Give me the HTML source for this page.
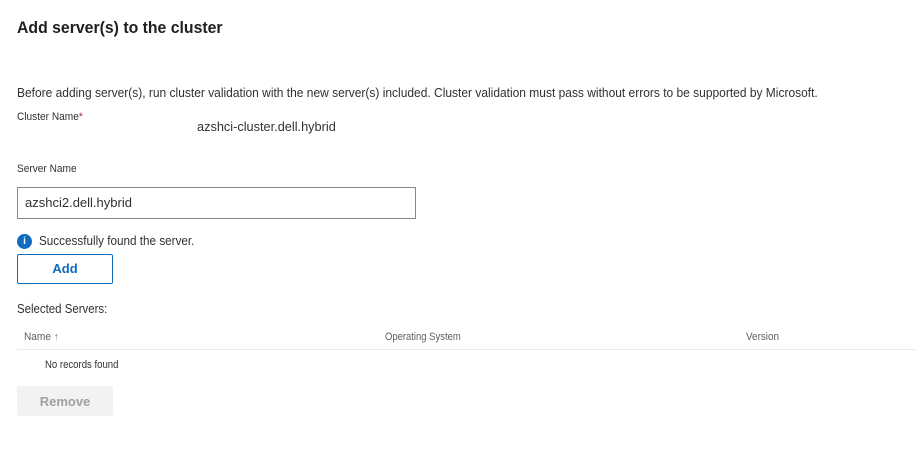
<!DOCTYPE html>
<html><head><meta charset="utf-8"><style>
body{margin:0;width:916px;height:461px;background:#fff;font-family:"Liberation Sans",sans-serif;color:#323130;position:relative;overflow:hidden}
.a{position:absolute;white-space:nowrap;transform-origin:left center}
</style></head><body>
<div class="a" style="left:17px;top:18px;font-size:17px;font-weight:bold;color:#201f1e;transform:scaleX(0.93)">Add server(s) to the cluster</div>
<div class="a" style="left:17px;top:85px;font-size:13px;transform:scaleX(0.922)">Before adding server(s), run cluster validation with the new server(s) included. Cluster validation must pass without errors to be supported by Microsoft.</div>
<div class="a" style="left:17px;top:111px;font-size:11px;transform:scaleX(0.92)">Cluster Name<span style="color:#a4262c">*</span></div>
<div class="a" style="left:197px;top:119px;font-size:13px;transform:scaleX(0.98)">azshci-cluster.dell.hybrid</div>
<div class="a" style="left:17px;top:163px;font-size:11px;transform:scaleX(0.92)">Server Name</div>
<div class="a" style="left:17px;top:187px;width:397px;height:30px;border:1px solid #8a8886"></div>
<div class="a" style="left:25px;top:195px;font-size:13px;transform:scaleX(1.0)">azshci2.dell.hybrid</div>
<div class="a" style="left:17px;top:234px;width:15px;height:15px;border-radius:50%;background:#0f6cbd;color:#fff;font-size:10px;font-weight:bold;text-align:center;line-height:15px">i</div>
<div class="a" style="left:39px;top:233px;font-size:13px;transform:scaleX(0.9)">Successfully found the server.</div>
<div class="a" style="left:17px;top:254px;width:94px;height:28px;border:1px solid #0f6cbd;border-radius:2px"></div>
<div class="a" style="left:17px;top:261px;width:96px;text-align:center;font-size:13px;font-weight:bold;color:#0f6cbd">Add</div>
<div class="a" style="left:17px;top:301px;font-size:13px;transform:scaleX(0.88)">Selected Servers:</div>
<div class="a" style="left:24px;top:331px;font-size:11px;color:#605e5c;transform:scaleX(0.92)">Name <span style="font-weight:lighter;color:#8a8886">↑</span></div>
<div class="a" style="left:385px;top:331px;font-size:11px;color:#605e5c;transform:scaleX(0.86)">Operating System</div>
<div class="a" style="left:746px;top:331px;font-size:11px;color:#605e5c;transform:scaleX(0.9)">Version</div>
<div class="a" style="left:17px;top:349px;width:899px;height:1px;background:#edebe9"></div>
<div class="a" style="left:45px;top:359px;font-size:11px;transform:scaleX(0.87)">No records found</div>
<div class="a" style="left:17px;top:386px;width:96px;height:30px;background:#f3f2f1;border-radius:2px"></div>
<div class="a" style="left:17px;top:394px;width:96px;text-align:center;font-size:13px;font-weight:bold;color:#a19f9d">Remove</div>
</body></html>
